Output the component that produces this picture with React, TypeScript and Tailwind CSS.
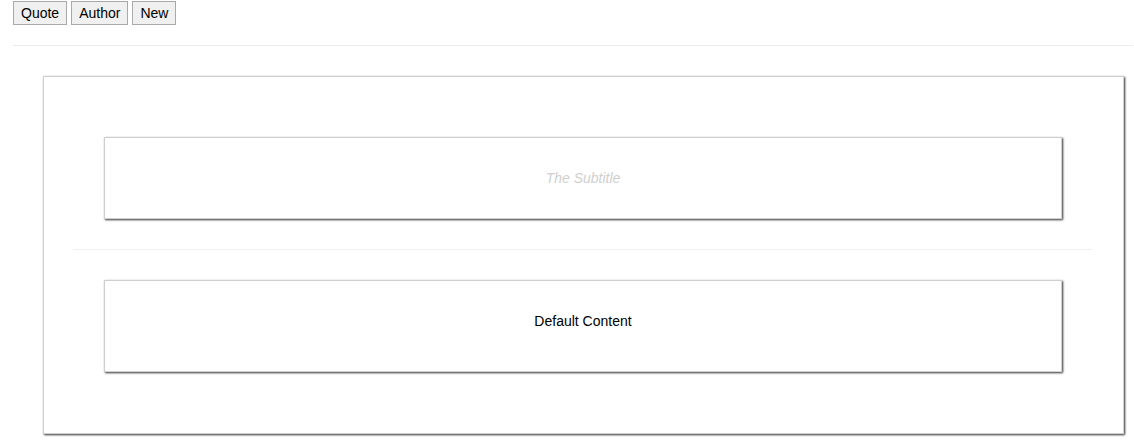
export default function App() {
  const btn =
    "h-[24px] px-[7px] border border-[#a9a9a9] bg-[#f0f0f0] text-[14px] leading-none text-black pb-[1px]";
  return (
    <div className="w-[1134px] h-[445px] bg-white overflow-hidden" style={{ fontFamily: '"Liberation Sans", Arial, sans-serif' }}>
      <div className="flex gap-[4px] pl-[13px] pt-[1px]">
        <button className={btn}>Quote</button>
        <button className={btn}>Author</button>
        <button className={btn}>New</button>
      </div>
      <div className="ml-[13px] mt-[20px] w-[1120px] h-px bg-[#ebebeb]" />
      <div className="ml-[43px] mt-[30px] w-[1081px] h-[358px] border border-[#cfcfcf] shadow-[1px_1px_2px_rgba(0,0,0,0.8)] pt-[60px]">
        <div className="ml-[60px] w-[958px] h-[82px] border border-[#cfcfcf] shadow-[1px_1px_2px_rgba(0,0,0,0.8)] flex items-center justify-center">
          <span className="italic text-[14px] text-[#cfcfcf]">The Subtitle</span>
        </div>
        <div className="ml-[29px] mt-[30px] w-[1019px] h-px bg-[#f0f0f0]" />
        <div className="ml-[60px] mt-[30px] w-[958px] h-[92px] border border-[#cfcfcf] shadow-[1px_1px_2px_rgba(0,0,0,0.8)] flex items-center justify-center">
          <span className="text-[14px] text-black mb-[10px]">Default Content</span>
        </div>
      </div>
    </div>
  );
}
